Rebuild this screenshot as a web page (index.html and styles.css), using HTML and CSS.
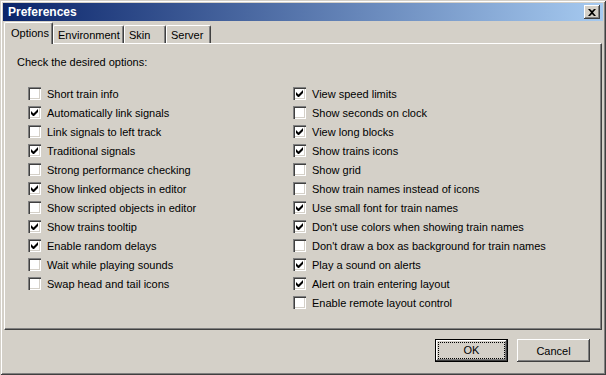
FILE: index.html
```html
<!DOCTYPE html>
<html lang="en">
<head>
    <meta charset="UTF-8">
    <title>Preferences</title>
    <link rel="stylesheet" href="styles.css">
</head>
<body>
    <div class="window">
        <div class="titlebar">
            <span class="title">Preferences</span>
            <span class="close">
                <svg width="8" height="7" viewBox="0 0 8 7"><path d="M0 0h2l2 2 2-2h2L5 3.5 8 7H6L4 5 2 7H0l3-3.5z" fill="#000"/></svg>
            </span>
        </div>
        <div class="tabs">
            <span class="tab active options">Options</span>
            <span class="tab env">Environment</span>
            <span class="tab skin">Skin</span>
            <span class="tab server">Server</span>
        </div>
        <div class="panel">
            <p class="heading">Check the desired options:</p>
            <div class="columns">
                <div class="col left">
                    <label><span class="box"></span>Short train info</label>
                    <label><span class="box on"></span>Automatically link signals</label>
                    <label><span class="box"></span>Link signals to left track</label>
                    <label><span class="box on"></span>Traditional signals</label>
                    <label><span class="box"></span>Strong performance checking</label>
                    <label><span class="box on"></span>Show linked objects in editor</label>
                    <label><span class="box"></span>Show scripted objects in editor</label>
                    <label><span class="box on"></span>Show trains tooltip</label>
                    <label><span class="box on"></span>Enable random delays</label>
                    <label><span class="box"></span>Wait while playing sounds</label>
                    <label><span class="box"></span>Swap head and tail icons</label>
                </div>
                <div class="col right">
                    <label><span class="box on"></span>View speed limits</label>
                    <label><span class="box"></span>Show seconds on clock</label>
                    <label><span class="box on"></span>View long blocks</label>
                    <label><span class="box on"></span>Show trains icons</label>
                    <label><span class="box"></span>Show grid</label>
                    <label><span class="box"></span>Show train names instead of icons</label>
                    <label><span class="box on"></span>Use small font for train names</label>
                    <label><span class="box on"></span>Don't use colors when showing train names</label>
                    <label><span class="box"></span>Don't draw a box as background for train names</label>
                    <label><span class="box on"></span>Play a sound on alerts</label>
                    <label><span class="box on"></span>Alert on train entering layout</label>
                    <label><span class="box"></span>Enable remote layout control</label>
                </div>
            </div>
        </div>
        <div class="buttons">
            <button class="btn default"><span class="focus">OK</span></button>
            <button class="btn">Cancel</button>
        </div>
    </div>
</body>
</html>
```

FILE: styles.css
```css
body {
    margin: 0;
    font-family: "Liberation Sans", Arial, sans-serif;
    font-size: 11px;
    color: #000;
    background: #d4d0c8;
}
.window {
    width: 606px;
    height: 375px;
    box-sizing: border-box;
    padding: 3px;
    background: #d4d0c8;
    box-shadow: inset 1px 1px 0 #d4d0c8, inset -1px -1px 0 #404040,
                inset 2px 2px 0 #fff, inset -2px -2px 0 #808080;
}
.titlebar {
    height: 18px;
    display: flex;
    align-items: center;
    justify-content: space-between;
    padding: 0 3px 0 5px;
    background: linear-gradient(to right, #0a246a, #a6caf0);
}
.title {
    color: #fff;
    font-weight: bold;
    font-size: 12px;
}
.close {
    width: 16px;
    height: 14px;
    box-sizing: border-box;
    display: flex;
    align-items: center;
    justify-content: center;
    background: #d4d0c8;
    box-shadow: inset -1px -1px 0 #404040, inset 1px 1px 0 #fff, inset -2px -2px 0 #808080;
}
.tabs {
    display: flex;
    align-items: flex-end;
    height: 21px;
    padding-left: 1px;
    margin-top: 1px;
}
.tab {
    flex-shrink: 0;
    height: 18px;
    line-height: 18px;
    padding: 0 0 0 4px;
    box-sizing: border-box;
    border-left: 1px solid #fff;
    border-top: 1px solid #fff;
    border-right: 1px solid #404040;
    border-radius: 2px 2px 0 0;
    box-shadow: inset -1px 0 0 #808080;
}
.tab.active {
    height: 22px;
    line-height: 20px;
    padding-left: 6px;
    margin-bottom: -1px;
    position: relative;
    z-index: 1;
    background: #d4d0c8;
}
.tab.options { width: 49px; }
.tab.env { width: 71px; }
.tab.skin { width: 42px; }
.tab.server { width: 45px; }
.panel {
    height: 287px;
    margin: 0 1px;
    box-sizing: border-box;
    border-top: 1px solid #fff;
    border-left: 1px solid #fff;
    border-right: 1px solid #404040;
    border-bottom: 1px solid #404040;
    box-shadow: inset -1px -1px 0 #808080;
    padding: 12px 12px 0 12px;
}
.heading {
    margin: 0 0 16px 0;
}
.columns {
    display: flex;
}
.col {
    display: flex;
    flex-direction: column;
}
.col.left {
    width: 265px;
    padding-left: 11px;
}
label {
    display: flex;
    align-items: center;
    height: 19px;
}
.box {
    width: 13px;
    height: 13px;
    box-sizing: border-box;
    margin-right: 6px;
    background: #fff;
    box-shadow: inset 1px 1px 0 #808080, inset 2px 2px 0 #404040, inset -1px -1px 0 #fff, inset -2px -2px 0 #d4d0c8;
    position: relative;
}
.box.on::after {
    content: "";
    position: absolute;
    left: 3px;
    top: 3px;
    width: 7px;
    height: 7px;
    background: url("data:image/svg+xml,%3Csvg xmlns='http://www.w3.org/2000/svg' width='7' height='7'%3E%3Cpath d='M0 2v3l2 2h1l4-4V0L2.5 4.5z' fill='%23000'/%3E%3C/svg%3E") no-repeat;
}
.buttons {
    display: flex;
    justify-content: flex-end;
    gap: 9px;
    padding: 9px 13px 0 0;
}
.btn {
    width: 73px;
    height: 23px;
    font-family: inherit;
    font-size: 11px;
    background: #d4d0c8;
    border: none;
    padding: 0;
    box-shadow: inset -1px -1px 0 #404040, inset 1px 1px 0 #fff, inset -2px -2px 0 #808080;
}
.btn.default {
    border: 1px solid #000;
}
.focus {
    display: block;
    margin: 2px;
    height: 15px;
    line-height: 15px;
    border: 1px dotted #000;
}
```
